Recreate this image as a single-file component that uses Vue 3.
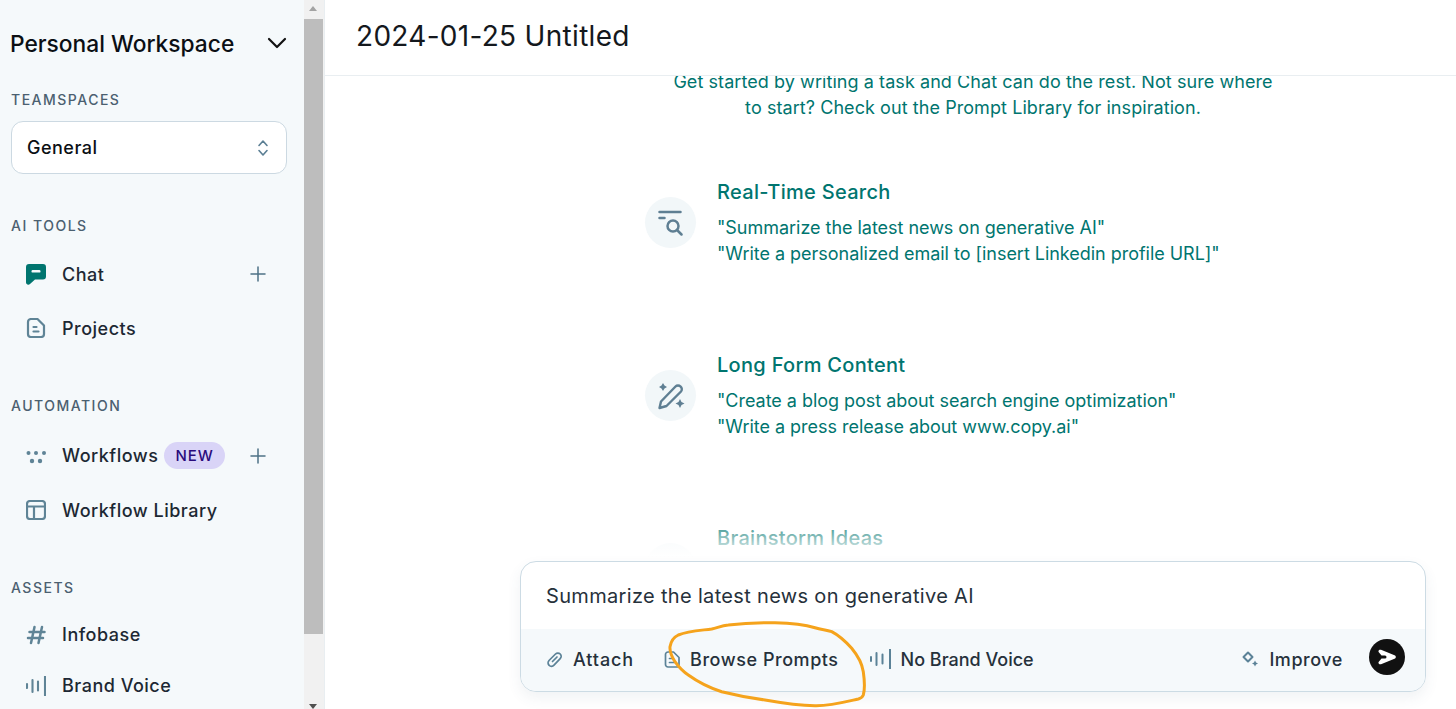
<script setup>
const prompts = [
  {
    id: 'search',
    title: 'Real-Time Search',
    lines: ['"Summarize the latest news on generative AI"', '"Write a personalized email to [insert Linkedin profile URL]"'],
  },
  {
    id: 'pen',
    title: 'Long Form Content',
    lines: ['"Create a blog post about search engine optimization"', '"Write a press release about www.copy.ai"'],
  },
  {
    id: 'idea',
    title: 'Brainstorm Ideas',
    lines: [],
  },
]
</script>

<template>
  <div class="app">
    <aside class="sidebar">
      <div class="workspace">
        <span>Personal Workspace</span>
        <svg width="20" height="20" viewBox="0 0 20 20" fill="none" stroke="#111" stroke-width="2.2" stroke-linecap="round" stroke-linejoin="round"><path d="M2 6l8 8 8-8" /></svg>
      </div>

      <h4 class="label first">TEAMSPACES</h4>
      <div class="select">
        <span>General</span>
        <svg width="12" height="18" viewBox="0 0 12 18" fill="none" stroke="#5b7f94" stroke-width="1.6" stroke-linecap="round" stroke-linejoin="round"><path d="M2 6.5L6 2l4 4.5M2 11.5L6 16l4-4.5" /></svg>
      </div>

      <h4 class="label">AI TOOLS</h4>
      <div class="row">
        <svg class="icon" width="20" height="21" viewBox="0 0 20 21"><path fill="#00756f" d="M3 0h14a3 3 0 0 1 3 3v9.500a3 3 0 0 1-3 3H9L4 20a2.300 2.300 0 0 1-4-1.500V3a3 3 0 0 1 3-3z" /><rect x="5.500" y="6" width="9" height="2.600" rx="1.200" fill="#f5f9fb" /></svg>
        <span>Chat</span>
        <svg class="plus" width="16" height="16" viewBox="0 0 16 16" stroke="#4d7286" stroke-width="1.500" stroke-linecap="round"><path d="M8 1v14M1 8h14" /></svg>
      </div>
      <div class="row">
        <svg class="icon" width="20" height="20" viewBox="0 0 20 20" fill="none" stroke="#5f8496" stroke-width="2.200" stroke-linejoin="round" stroke-linecap="round"><path d="M5 1h6.500l6.500 6.500V16a3 3 0 0 1-3 3H5a3 3 0 0 1-3-3V4a3 3 0 0 1 3-3z" /><path d="M7.500 9h3M7.500 13.500h5" /></svg>
        <span>Projects</span>
      </div>

      <h4 class="label section">AUTOMATION</h4>
      <div class="row tall">
        <svg class="icon" width="20" height="20" viewBox="0 0 20 20" fill="#5f8496"><circle cx="2.500" cy="7" r="2" /><circle cx="10" cy="7" r="2" /><circle cx="18" cy="7" r="2" /><circle cx="6" cy="15" r="2.200" /><circle cx="14" cy="15" r="2.200" /></svg>
        <span>Workflows</span>
        <span class="badge">NEW</span>
        <svg class="plus" width="16" height="16" viewBox="0 0 16 16" stroke="#4d7286" stroke-width="1.500" stroke-linecap="round"><path d="M8 1v14M1 8h14" /></svg>
      </div>
      <div class="row">
        <svg class="icon" width="20" height="20" viewBox="0 0 20 20" fill="none" stroke="#5f8496" stroke-width="2.200" stroke-linejoin="round"><rect x="1" y="1" width="18" height="18" rx="3" /><path d="M1 6.500h18M8 6.500V19" /></svg>
        <span>Workflow Library</span>
      </div>

      <h4 class="label assets">ASSETS</h4>
      <div class="row short">
        <svg class="icon" width="20" height="20" viewBox="0 0 20 20" fill="none" stroke="#5f8496" stroke-width="2.500" stroke-linecap="round"><path d="M8.500 2L5 18M16 2l-3.500 16M3.500 7h15M2 13h15" /></svg>
        <span>Infobase</span>
      </div>
      <div class="row short">
        <svg class="icon" width="20" height="20" viewBox="0 0 20 20" fill="none" stroke="#5f8496" stroke-width="2.100" stroke-linecap="round"><path d="M1 8v4M6.500 4v12M12 5.500v9M19 .5v19" /></svg>
        <span>Brand Voice</span>
      </div>
    </aside>

    <div class="scrollbar">
      <div class="arrow up"></div>
      <div class="thumb"></div>
      <div class="track"></div>
      <div class="arrow down"></div>
    </div>

    <main class="main">
      <header class="topbar">2024-01-25 Untitled</header>

      <div class="content">
        <p class="intro">
          Get started by writing a task and Chat can do the rest. Not sure where<br />
          to start? Check out the Prompt Library for inspiration.
        </p>

        <div v-for="prompt in prompts" :key="prompt.id" class="prompt">
          <div class="bubble">
            <svg v-if="prompt.id === 'search'" width="26" height="26" viewBox="0 0 26 26" fill="none" stroke="#5f7f93" stroke-width="2.500" stroke-linecap="round"><path d="M1.500 2h21M1.500 8h5" /><circle cx="15" cy="16" r="5.500" /><path d="M19.500 20.500l4 4" /></svg>
            <svg v-else-if="prompt.id === 'pen'" width="28" height="28" viewBox="0 0 28 28" fill="none" stroke="#5f7f93" stroke-width="2.400" stroke-linejoin="round" stroke-linecap="round"><path d="M2.500 26l1.500-6.500L18.500 4.500a3.500 3.500 0 0 1 5 0 3.500 3.500 0 0 1 .5 5L9.500 24 2.500 26z" /><path fill="#5f7f93" stroke="none" d="M6 1l1.500 2.500L10 5 7.500 6.500 6 9 4.500 6.500 2 5l2.500-1.500zM23 17l1.500 3 3 1.500-3 1.500-1.500 3-1.500-3-3-1.500 3-1.500z" /></svg>
            <svg v-else width="24" height="24" viewBox="0 0 24 24" fill="#5f7f93"><circle cx="12" cy="10" r="8" /></svg>
          </div>
          <div class="prompt-text">
            <h3>{{ prompt.title }}</h3>
            <p v-for="line in prompt.lines" :key="line">{{ line }}</p>
          </div>
        </div>
      </div>

      <div class="fade"></div>

      <div class="composer">
        <div class="composer-input">Summarize the latest news on generative AI</div>
        <div class="composer-bar">
          <button class="tool attach">
            <svg width="17" height="17" viewBox="0 0 17 17" fill="none" stroke="#5b8297" stroke-width="1.700" stroke-linecap="round" stroke-linejoin="round"><path d="M3 9.500L9.500 3a3.300 3.300 0 0 1 4.700 4.700L8 14.200a3.300 3.300 0 0 1-5-4.700z" /><path d="M6.500 10.500L11 6" /></svg>
            Attach
          </button>
          <button class="tool browse">
            <svg width="16" height="17" viewBox="0 0 16 17" fill="none" stroke="#5b8297" stroke-width="1.700" stroke-linejoin="round" stroke-linecap="round"><path d="M4 1h5.500L15 6.500v7a2.500 2.500 0 0 1-2.500 2.500h-8.500A2.500 2.500 0 0 1 1.500 13.500V3.500A2.500 2.500 0 0 1 4 1z" /><path d="M5.500 7.500h2.500M5.500 11.500h5" /></svg>
            Browse Prompts
          </button>
          <button class="tool voice">
            <svg width="21" height="20" viewBox="0 0 21 20" fill="none" stroke="#5b8297" stroke-width="2" stroke-linecap="round"><path d="M1 8v4M6.500 4v12M12.500 5.500v9M20 .5v19" /></svg>
            No Brand Voice
          </button>
          <button class="tool improve">
            <svg width="17" height="17" viewBox="0 0 17 17" fill="none" stroke="#5b8297" stroke-width="2" stroke-linejoin="round"><path d="M6 1.500L10.500 6 6 10.500 1.500 6z" /><path fill="#5b8297" stroke="none" d="M13 9.500l1 2 2 1-2 1-1 2-1-2-2-1 2-1z" /></svg>
            Improve
          </button>
          <button class="send" aria-label="Send">
            <svg width="18" height="16" viewBox="0 0 18 16"><path fill="#fff" d="M3 .8l13.500 5.400c1.800.8 1.800 2.800 0 3.600L3 15.200c-2 .6-3.200-1-2.200-2.500L3.500 9.500H7a1.500 1.500 0 0 0 0-3H3.500L.8 3.300C-.2 1.800 1 .2 3 .8z" /></svg>
          </button>
        </div>
        <svg class="scribble" width="210" height="100" viewBox="665 615 210 100" fill="none" stroke="#f5a31c" stroke-width="3" stroke-linecap="round" stroke-linejoin="round">
          <path d="M815 627.700C822 630 826 629.500 831.700 631.700C840 636 846 642 851.700 648.300C858 656 862 663 863.300 671.700C864.500 680 865 689 863.300 695C862 698 860 698.500 858.300 699C845 702 830 706 815 705.700C798 705.500 782 703 765 700C750 698 735 695 721.700 691.700C710 688 698 682 688.300 675C682 671 678 666 675 661.700C672 657 669.500 652 670 646.700C671 641 674 637 678.300 635C688 631 700 630.500 711.700 629C718 627.500 722 625.500 728.300 625C745 623 760 622.500 775 622.700C790 623 803 624 815 627.700" />
        </svg>
      </div>
    </main>
  </div>
</template>

<style>
html,
body {
  margin: 0;
  overflow: hidden;
}
</style>

<style scoped>
.app {
  display: flex;
  width: 1456px;
  height: 709px;
  overflow: hidden;
  background: #fff;
  font-family: Inter, "Liberation Sans", sans-serif;
}

.sidebar {
  flex: 0 0 304px;
  height: 709px;
  overflow: hidden;
  box-sizing: border-box;
  padding: 0 17px 0 11px;
  background: #f5f9fb;
}

.workspace {
  display: flex;
  align-items: center;
  justify-content: space-between;
  height: 30px;
  margin: 28px 0 0 -1px;
  font-size: 22.750px;
  font-weight: 500;
  color: #0b0f14;
}

.label {
  margin: 42px 0 11px;
  font-size: 14px;
  line-height: 20px;
  font-weight: 500;
  letter-spacing: 1.500px;
  color: #4b6070;
}

.label.first {
  margin-top: 32px;
}

.label.section {
  margin-top: 41px;
  margin-bottom: 12px;
}

.label.assets {
  margin-top: 41px;
  margin-bottom: 11px;
}

.select {
  display: flex;
  align-items: center;
  justify-content: space-between;
  box-sizing: border-box;
  height: 53px;
  width: 276px;
  padding: 0 17px 0 15px;
  background: #fff;
  border: 1px solid #ccd9e2;
  border-radius: 12px;
  font-size: 18px;
  font-weight: 500;
  letter-spacing: 0.500px;
  color: #0b0f14;
}

.row {
  display: flex;
  align-items: center;
  height: 54px;
  padding-left: 15px;
  font-size: 18px;
  font-weight: 500;
  color: #1d2833;
  letter-spacing: 0.500px;
}

.row.tall {
  height: 55px;
}

.row.short {
  height: 51px;
}

.icon {
  flex: none;
  margin-right: 16px;
}

.plus {
  position: relative;
  margin-left: auto;
  margin-right: 21px;
}

.badge {
  margin-left: 6px;
  padding: 0 11px;
  height: 27px;
  line-height: 27px;
  border-radius: 14px;
  background: #d9d4f7;
  color: #2a0b7c;
  font-size: 15px;
  letter-spacing: 1px;
}

.scrollbar {
  flex: 0 0 20px;
  display: flex;
  flex-direction: column;
  height: 709px;
  background: #f1f1f1;
  border-right: 1px solid #e9eef1;
}

.arrow {
  flex: 0 0 19px;
  position: relative;
}

.arrow::after {
  content: "";
  position: absolute;
  left: 5px;
  border-left: 4.500px solid transparent;
  border-right: 4.500px solid transparent;
}

.arrow.up::after {
  top: 6px;
  border-bottom: 5px solid #a3a3a3;
}

.arrow.down::after {
  bottom: 0;
  border-top: 5px solid #505050;
}

.thumb {
  flex: 0 0 615px;
  margin-right: 1px;
  background: #bdbdbd;
}

.track {
  flex: 1;
}

.main {
  position: relative;
  flex: 1;
  height: 709px;
  overflow: hidden;
  background: #fff;
}

.topbar {
  position: relative;
  z-index: 1;
  height: 76px;
  box-sizing: border-box;
  padding: 18px 0 0 31px;
  border-bottom: 1px solid #e9eef1;
  background: #fff;
  font-size: 28px;
  line-height: 36px;
  letter-spacing: 0.300px;
  color: #14181d;
}

.content {
  width: 656px;
  margin: -7px 0 0 320px;
  color: #00756f;
}

.intro {
  margin: 0 0 57px;
  font-size: 18px;
  line-height: 26px;
  letter-spacing: 0.070px;
  text-align: center;
}

.prompt {
  display: flex;
  align-items: center;
  gap: 21px;
  height: 89px;
  margin-bottom: 84px;
}

.bubble {
  flex: 0 0 51px;
  height: 51px;
  display: flex;
  align-items: center;
  justify-content: center;
  border-radius: 50%;
  background: #f2f7f9;
}

.prompt-text {
  align-self: flex-start;
}

.prompt-text h3 {
  margin: 0 0 9px;
  font-size: 20px;
  line-height: 28px;
  font-weight: 500;
  letter-spacing: 0.300px;
}

.prompt-text p {
  margin: 0;
  font-size: 18px;
  line-height: 26px;
  letter-spacing: -0.030px;
  white-space: nowrap;
}

.fade {
  position: absolute;
  left: 0;
  right: 0;
  top: 515px;
  bottom: 0;
  background: linear-gradient(rgba(255, 255, 255, 0), #fff 42px);
}

.composer {
  position: absolute;
  left: 195px;
  top: 561px;
  width: 906px;
  height: 131px;
  box-sizing: border-box;
  border: 1px solid #ccdbe4;
  border-radius: 16px;
  background: #fff;
  box-shadow: 0 6px 14px rgba(60, 90, 110, 0.08);
}

.composer-input {
  height: 67px;
  padding-left: 25px;
  font-size: 20px;
  line-height: 69px;
  letter-spacing: 0.330px;
  color: #26313b;
}

.composer-bar {
  display: flex;
  align-items: center;
  box-sizing: border-box;
  height: 62px;
  padding: 0 20px 2px 25px;
  border-radius: 0 0 15px 15px;
  background: #f5f9fb;
}

.tool {
  display: flex;
  align-items: center;
  padding: 0;
  border: 0;
  background: none;
  font-family: inherit;
  font-size: 18px;
  font-weight: 500;
  color: #26313b;
  letter-spacing: 0.550px;
}

.attach {
  letter-spacing: 0.900px;
}

.attach svg,
.improve svg {
  margin-right: 10px;
}

.browse {
  margin-left: 30px;
}

.browse svg {
  margin-right: 10px;
}

.voice {
  margin-left: 31px;
  letter-spacing: 0;
}

.voice svg {
  margin-right: 10px;
}

.improve {
  margin-left: auto;
}

.send {
  display: flex;
  align-items: center;
  justify-content: center;
  width: 36px;
  height: 36px;
  margin: -4px 0 0 26px;
  padding: 0;
  border: 0;
  border-radius: 50%;
  background: #111;
}

.scribble {
  position: absolute;
  left: 144px;
  top: 53px;
  pointer-events: none;
}
</style>
